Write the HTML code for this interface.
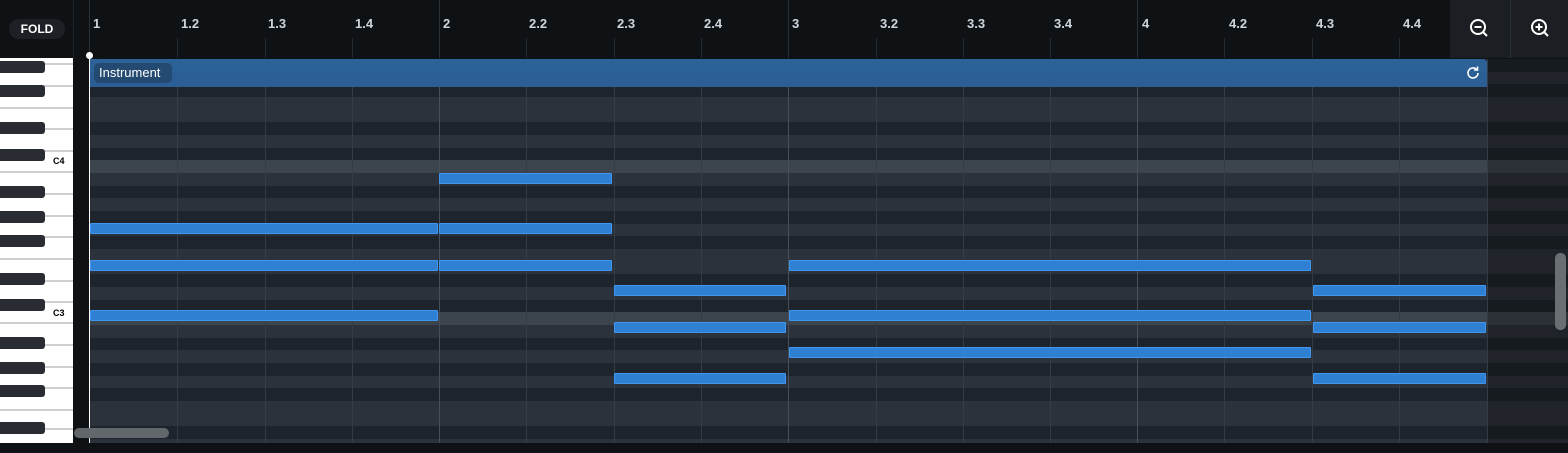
<!DOCTYPE html>
<html><head><style>
*{margin:0;padding:0;box-sizing:border-box}
body{width:1568px;height:453px;background:#0f1215;position:relative;overflow:hidden;font-family:"Liberation Sans",sans-serif}
.abs{position:absolute}
.row{position:absolute;left:89px;width:1479px;height:13px}
.w{background:#2b323b}.b{background:#1d242b}.h{background:#3c454e}
.vl{position:absolute;top:59px;height:384px;width:1px;background:#343c46}
.vb{background:#47505a}
.note{position:absolute;height:11px;background:#2f7fd3;border:1px solid #3f97f0;border-radius:1px}
.lab{position:absolute;top:16px;color:#cdd5de;font-size:13px;font-weight:bold}
.hl{position:absolute;top:38px;height:20px;width:1px;background:#252b31}
.bk{position:absolute;left:0;width:45px;height:12px;background:#2a2c33;border-radius:0 3px 3px 0}
.wl{position:absolute;left:0;width:73px;height:2px;background:#cfcfcf}
</style></head><body>
<!-- header -->
<div class="abs" style="left:0;top:0;width:1568px;height:58px;background:#0f1215"></div>
<div class="abs" style="left:73px;top:0;width:1px;height:58px;background:#1e2328"></div>
<div class="abs" style="left:9px;top:19px;width:56px;height:20px;border-radius:10px;background:#1d2126;color:#fff;font-size:12px;font-weight:bold;text-align:center;line-height:20px">FOLD</div>
<div class="hl" style="left:177px"></div><div class="hl" style="left:265px"></div><div class="hl" style="left:352px"></div>
<div class="hl" style="left:526px"></div><div class="hl" style="left:614px"></div><div class="hl" style="left:701px"></div>
<div class="hl" style="left:876px"></div><div class="hl" style="left:963px"></div><div class="hl" style="left:1050px"></div>
<div class="hl" style="left:1224px"></div><div class="hl" style="left:1312px"></div><div class="hl" style="left:1399px"></div>
<div class="hl" style="left:439px;top:0;height:58px;background:#2a3036"></div>
<div class="hl" style="left:788px;top:0;height:58px;background:#2a3036"></div>
<div class="hl" style="left:1137px;top:0;height:58px;background:#2a3036"></div>
<div class="hl" style="left:89px;top:0;height:58px;background:#2a3036"></div>
<span class="lab" style="left:93px">1</span><span class="lab" style="left:181px">1.2</span><span class="lab" style="left:268px">1.3</span><span class="lab" style="left:355px">1.4</span>
<span class="lab" style="left:443px">2</span><span class="lab" style="left:529px">2.2</span><span class="lab" style="left:617px">2.3</span><span class="lab" style="left:704px">2.4</span>
<span class="lab" style="left:792px">3</span><span class="lab" style="left:880px">3.2</span><span class="lab" style="left:967px">3.3</span><span class="lab" style="left:1054px">3.4</span>
<span class="lab" style="left:1142px">4</span><span class="lab" style="left:1229px">4.2</span><span class="lab" style="left:1316px">4.3</span><span class="lab" style="left:1403px">4.4</span>
<div class="abs" style="left:1450px;top:0;width:118px;height:58px;background:#1b1f23"></div>
<div class="abs" style="left:1510px;top:0;width:1px;height:58px;background:#2b3036"></div>
<svg class="abs" style="left:1468px;top:17px" width="24" height="24" viewBox="0 0 24 24"><circle cx="10" cy="10" r="7" fill="none" stroke="#fff" stroke-width="2"/><path d="M6.5 10h7M15 15l4 4" stroke="#fff" stroke-width="2" fill="none"/></svg>
<svg class="abs" style="left:1529px;top:17px" width="24" height="24" viewBox="0 0 24 24"><circle cx="10" cy="10" r="7" fill="none" stroke="#fff" stroke-width="2"/><path d="M6.5 10h7M10 6.5v7M15 15l4 4" stroke="#fff" stroke-width="2" fill="none"/></svg>
<!-- grid bg -->
<div class="abs" style="left:73px;top:58px;width:1495px;height:385px;background:#0f1215"></div>
<div class="row b" style="top:59px"></div>
<div class="row w" style="top:72px"></div>
<div class="row b" style="top:84px"></div>
<div class="row w" style="top:97px"></div>
<div class="row w" style="top:110px"></div>
<div class="row b" style="top:122px"></div>
<div class="row w" style="top:135px"></div>
<div class="row b" style="top:148px"></div>
<div class="row h" style="top:160px"></div>
<div class="row w" style="top:173px"></div>
<div class="row b" style="top:186px"></div>
<div class="row w" style="top:198px"></div>
<div class="row b" style="top:211px"></div>
<div class="row w" style="top:224px"></div>
<div class="row b" style="top:236px"></div>
<div class="row w" style="top:249px"></div>
<div class="row w" style="top:262px"></div>
<div class="row b" style="top:274px"></div>
<div class="row w" style="top:287px"></div>
<div class="row b" style="top:300px"></div>
<div class="row h" style="top:312px"></div>
<div class="row w" style="top:325px"></div>
<div class="row b" style="top:338px"></div>
<div class="row w" style="top:350px"></div>
<div class="row b" style="top:363px"></div>
<div class="row w" style="top:376px"></div>
<div class="row b" style="top:388px"></div>
<div class="row w" style="top:401px"></div>
<div class="row w" style="top:414px"></div>
<div class="row b" style="top:426px"></div>
<div class="row w" style="top:439px;height:4px"></div>
<div class="vl" style="left:177px"></div><div class="vl" style="left:265px"></div><div class="vl" style="left:352px"></div>
<div class="vl vb" style="left:439px"></div><div class="vl" style="left:526px"></div><div class="vl" style="left:614px"></div><div class="vl" style="left:701px"></div>
<div class="vl vb" style="left:788px"></div><div class="vl" style="left:876px"></div><div class="vl" style="left:963px"></div><div class="vl" style="left:1050px"></div>
<div class="vl vb" style="left:1137px"></div><div class="vl" style="left:1224px"></div><div class="vl" style="left:1312px"></div><div class="vl" style="left:1399px"></div>
<div class="vl" style="left:1487px"></div>
<div class="abs" style="left:1488px;top:59px;width:80px;height:384px;background:rgba(12,12,12,0.35)"></div>
<!-- instrument bar -->
<div class="abs" style="left:90px;top:59px;width:1397px;height:28px;background:#2a5e94;border-radius:0 4px 0 0"></div>
<div class="abs" style="left:90px;top:59px;width:1397px;height:13px;background:#2d6299;border-radius:0 4px 0 0"></div>
<div class="abs" style="left:94px;top:63px;width:78px;height:20px;border-radius:5px;background:#244a72;color:#fff;font-size:13px;line-height:20px;padding-left:5px">Instrument</div>
<svg class="abs" style="left:1465px;top:65px" width="16" height="16" viewBox="0 0 16 16"><path d="M13 8a5 5 0 1 1-1.5-3.6" fill="none" stroke="#fff" stroke-width="1.6"/><path d="M12.5 1.5v3.5H9" fill="none" stroke="#fff" stroke-width="1.6"/></svg>
<!-- notes -->
<div class="note" style="left:439px;top:173px;width:173px"></div>
<div class="note" style="left:90px;top:223px;width:348px"></div>
<div class="note" style="left:439px;top:223px;width:173px"></div>
<div class="note" style="left:90px;top:260px;width:348px"></div>
<div class="note" style="left:439px;top:260px;width:173px"></div>
<div class="note" style="left:789px;top:260px;width:522px"></div>
<div class="note" style="left:614px;top:285px;width:172px"></div>
<div class="note" style="left:1313px;top:285px;width:173px"></div>
<div class="note" style="left:90px;top:310px;width:348px"></div>
<div class="note" style="left:789px;top:310px;width:522px"></div>
<div class="note" style="left:614px;top:322px;width:172px"></div>
<div class="note" style="left:1313px;top:322px;width:173px"></div>
<div class="note" style="left:789px;top:347px;width:522px"></div>
<div class="note" style="left:614px;top:373px;width:172px"></div>
<div class="note" style="left:1313px;top:373px;width:173px"></div>
<!-- piano -->
<div class="abs" style="left:0;top:58px;width:73px;height:385px;background:#fff"></div>
<div class="wl" style="top:63px"></div><div class="wl" style="top:85px"></div><div class="wl" style="top:107px"></div><div class="wl" style="top:128px"></div><div class="wl" style="top:150px"></div><div class="wl" style="top:171px"></div>
<div class="wl" style="top:193px"></div><div class="wl" style="top:215px"></div><div class="wl" style="top:236px"></div><div class="wl" style="top:258px"></div><div class="wl" style="top:280px"></div><div class="wl" style="top:301px"></div><div class="wl" style="top:322px"></div>
<div class="wl" style="top:344px"></div><div class="wl" style="top:366px"></div><div class="wl" style="top:387px"></div><div class="wl" style="top:409px"></div><div class="wl" style="top:428px"></div>
<div class="bk" style="top:61px"></div><div class="bk" style="top:85px"></div><div class="bk" style="top:122px"></div><div class="bk" style="top:149px"></div>
<div class="bk" style="top:186px"></div><div class="bk" style="top:211px"></div><div class="bk" style="top:235px"></div><div class="bk" style="top:273px"></div><div class="bk" style="top:299px"></div>
<div class="bk" style="top:337px"></div><div class="bk" style="top:362px"></div><div class="bk" style="top:385px"></div><div class="bk" style="top:422px"></div>
<span class="abs" style="left:53px;top:156px;font-size:9px;font-weight:bold;color:#000">C4</span>
<span class="abs" style="left:53px;top:308px;font-size:9px;font-weight:bold;color:#000">C3</span>
<!-- playhead -->
<div class="abs" style="left:89px;top:55px;width:1px;height:388px;background:#fff"></div>
<div class="abs" style="left:86px;top:52px;width:7px;height:7px;border-radius:50%;background:#fff"></div>
<!-- scrollbars -->
<div class="abs" style="left:74px;top:428px;width:95px;height:10px;border-radius:5px;background:#62676c"></div>
<div class="abs" style="left:1555px;top:253px;width:11px;height:77px;border-radius:5px;background:#6a6f74"></div>
<div class="abs" style="left:0;top:443px;width:1568px;height:10px;background:#0f1215"></div>
</body></html>
